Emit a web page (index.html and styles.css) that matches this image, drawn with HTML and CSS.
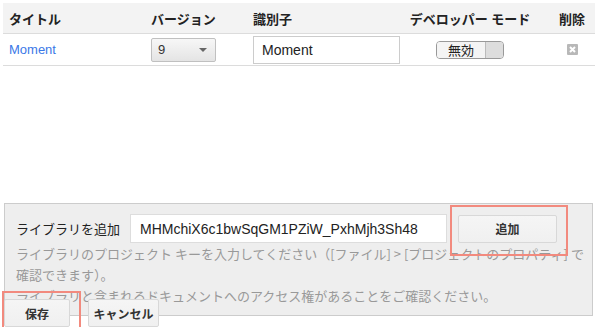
FILE: index.html
```html
<!DOCTYPE html>
<html lang="ja">
<head>
    <meta charset="UTF-8">
    <title>ライブラリ</title>
    <link rel="stylesheet" href="styles.css">
</head>
<body>
    <div class="page">
        <!-- Library table -->
        <div class="lib-table">
            <div class="lib-row lib-head">
                <div class="cell">タイトル</div>
                <div class="cell">バージョン</div>
                <div class="cell">識別子</div>
                <div class="cell center">デベロッパー モード</div>
                <div class="cell center del-col">削除</div>
            </div>
            <div class="lib-row">
                <div class="cell"><a href="#" class="lib-link">Moment</a></div>
                <div class="cell">
                    <div class="version-select">
                        <span>9</span>
                        <span class="arrow"></span>
                    </div>
                </div>
                <div class="cell"><input class="id-input" type="text" value="Moment"></div>
                <div class="cell center">
                    <div class="toggle">
                        <span class="toggle-label">無効</span>
                        <span class="toggle-knob"></span>
                    </div>
                </div>
                <div class="cell center del-col">
                    <span class="delete-icon">
                        <svg width="11" height="11" viewBox="0 0 11 11"><path d="M3 3 L8 8 M8 3 L3 8" stroke="#fff" stroke-width="2"/></svg>
                    </span>
                </div>
            </div>
        </div>

        <!-- Add library panel -->
        <div class="add-panel">
            <div class="add-row">
                <label for="lib-key">ライブラリを追加</label>
                <input id="lib-key" class="key-input" type="text" value="MHMchiX6c1bwSqGM1PZiW_PxhMjh3Sh48">
                <span class="marked mark-add"><button class="btn btn-add">追加</button></span>
            </div>
            <p class="help">ライブラリのプロジェクト キーを入力してください（[ファイル] &gt; [プロジェクトのプロパティ] で確認できます）。<br>ライブラリと含まれるドキュメントへのアクセス権があることをご確認ください。</p>
        </div>

        <div class="actions">
            <span class="marked mark-save"><button class="btn btn-save">保存</button></span>
            <button class="btn btn-cancel">キャンセル</button>
        </div>
    </div>
</body>
</html>
```

FILE: styles.css
```css
* {
    box-sizing: border-box;
}

body {
    margin: 0;
    background: #fff;
    font-family: 'Liberation Sans', 'Noto Sans CJK JP', sans-serif;
    font-size: 13px;
    color: #222;
}

.page {
    padding-top: 3px;
}

/* table */
.lib-table {
    margin: 0 5px 0 3px;
}

.lib-row {
    display: grid;
    grid-template-columns: 142px 102px 153px 140px 55px;
    align-items: center;
    height: 32px;
    border-bottom: 1px solid #dcdcdc;
}

.lib-head {
    height: 31px;
    background: #f3f3f3;
    font-weight: 700;
    color: #222;
}

.cell {
    padding-left: 6px;
    white-space: nowrap;
}

.cell.center {
    padding-left: 0;
    text-align: center;
    display: flex;
    justify-content: center;
}

.cell.del-col {
    padding-left: 9px;
}

.lib-link {
    color: #3b78e7;
    text-decoration: none;
}

.version-select {
    width: 65px;
    height: 24px;
    border: 1px solid #c0c0c0;
    border-radius: 2px;
    background: linear-gradient(to bottom, #f7f7f7, #e4e4e4);
    display: flex;
    align-items: center;
    justify-content: space-between;
    padding: 0 8px 0 6px;
    color: #333;
}

.version-select .arrow {
    width: 0;
    height: 0;
    border-left: 4px solid transparent;
    border-right: 4px solid transparent;
    border-top: 4px solid #666;
}

.id-input {
    width: 147px;
    height: 28px;
    border: 1px solid #ccc;
    padding: 0 8px;
    font-family: inherit;
    font-size: 14px;
    color: #222;
    outline: none;
}

.toggle {
    display: flex;
    width: 68px;
    height: 18px;
    border: 1px solid #999;
    border-radius: 4px;
    overflow: hidden;
}

.toggle-label {
    width: 49px;
    background: #f4f4f4;
    font-family: 'Noto Sans CJK JP', sans-serif;
    font-size: 13px;
    line-height: 16px;
    color: #222;
    border-right: 1px solid #bbb;
}

.toggle-knob {
    flex: 1;
    background: #ddd;
}

.delete-icon {
    display: inline-flex;
    width: 11px;
    height: 11px;
    background: #b8b8b8;
    border-radius: 1px;
}

/* add panel */
.add-panel {
    margin: 137px 7px 0 4px;
    padding: 10px 8px 9px 11px;
    background: #eee;
    border: 1px solid #ccc;
}

.add-row {
    display: flex;
    align-items: center;
}

.add-row label {
    font-family: 'Noto Sans CJK JP', sans-serif;
    color: #222;
    margin-right: 10px;
}

.key-input {
    width: 317px;
    height: 29px;
    border: 1px solid #ddd;
    padding: 0 9px;
    font-family: inherit;
    font-size: 14px;
    color: #222;
    outline: none;
}

.help {
    margin: 0;
    color: #999;
    line-height: 21px;
    font-family: 'Noto Sans CJK JP', sans-serif;
}

.btn {
    height: 28px;
    border: 1px solid #d8d8d8;
    border-radius: 2px;
    background: linear-gradient(to bottom, #f5f5f5, #f0f0f0);
    font-family: 'Noto Sans CJK JP', sans-serif;
    font-size: 12px;
    font-weight: 700;
    color: #333;
    padding: 0;
    cursor: pointer;
}

.btn-add {
    width: 99px;
}

.mark-add {
    margin-left: 11px;
}

.actions {
    display: flex;
    gap: 18px;
    margin: -17px 0 0 4px;
}

.btn-save {
    width: 66px;
}

.btn-cancel {
    width: 71px;
}

/* red annotation boxes */
.marked {
    position: relative;
    display: inline-flex;
}

.marked::after {
    content: "";
    position: absolute;
    border: 2px solid #f28a7e;
    pointer-events: none;
}

.mark-add::after {
    inset: -10px -11px -13px -8px;
}

.mark-save::after {
    inset: -8px -11px -4px -2px;
}
```
